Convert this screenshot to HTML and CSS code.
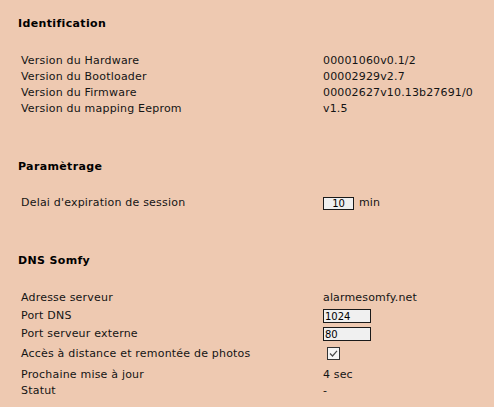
FILE: index.html
```html
<!DOCTYPE html>
<html lang="fr">
<head>
<meta charset="utf-8">
<title>Configuration</title>
<link rel="stylesheet" href="styles.css">
</head>
<body>
<div class="page">
  <section class="sec">
    <h2 class="sec-title">Identification</h2>
    <div class="rows">
      <div class="row"><span class="label">Version du Hardware</span><span class="value">00001060v0.1/2</span></div>
      <div class="row"><span class="label">Version du Bootloader</span><span class="value">00002929v2.7</span></div>
      <div class="row"><span class="label">Version du Firmware</span><span class="value">00002627v10.13b27691/0</span></div>
      <div class="row"><span class="label">Version du mapping Eeprom</span><span class="value">v1.5</span></div>
    </div>
  </section>
  <section class="sec">
    <h2 class="sec-title">Paramètrage</h2>
    <div class="rows rows-tight">
      <div class="row"><span class="label">Delai d'expiration de session</span><span class="value"><input class="field field-short" type="text" value="10"><span class="unit">min</span></span></div>
    </div>
  </section>
  <section class="sec">
    <h2 class="sec-title">DNS Somfy</h2>
    <div class="rows">
      <div class="row row-first"><span class="label">Adresse serveur</span><span class="value">alarmesomfy.net</span></div>
      <div class="row row-input"><span class="label">Port DNS</span><span class="value"><input class="field field-port" type="text" value="1024"></span></div>
      <div class="row row-input"><span class="label">Port serveur externe</span><span class="value"><input class="field field-port" type="text" value="80"></span></div>
      <div class="row row-check"><span class="label">Accès à distance et remontée de photos</span><span class="value"><span class="check"><svg viewBox="0 0 13 13" width="13" height="13"><rect x="0.5" y="0.5" width="12" height="12" fill="#f4f4f4" stroke="#333"/><path d="M3 6.5 L5.5 9 L10 3.8" fill="none" stroke="#4a4a4a" stroke-width="1.2"/></svg></span></span></div>
      <div class="row"><span class="label">Prochaine mise à jour</span><span class="value">4 sec</span></div>
      <div class="row"><span class="label">Statut</span><span class="value">-</span></div>
    </div>
  </section>
</div>
</body>
</html>
```

FILE: styles.css
```css
html, body {
  margin: 0;
  padding: 0;
  background: #eec9b1;
}
body {
  font-family: "DejaVu Sans", Verdana, sans-serif;
  font-size: 11px;
  line-height: 16px;
  color: #141414;
  width: 494px;
  height: 407px;
  overflow: hidden;
}
.page {
  padding: 16px 0 0 18px;
}
.sec + .sec {
  margin-top: 42px;
}
.sec-title {
  margin: 0;
  font-size: 11px;
  font-weight: bold;
  letter-spacing: 0.35px;
  line-height: 16px;
  height: 16px;
  color: #000;
}
.rows {
  margin-top: 21px;
  display: flex;
  flex-direction: column;
}
.rows-tight {
  margin-top: 20px;
}
.row {
  display: flex;
  align-items: center;
  height: 16px;
}
.row-first {
  height: 17px;
  align-items: flex-start;
}
.row-input {
  height: 18px;
}
.row-check {
  height: 24px;
  align-items: flex-start;
  padding-top: 3px;
  box-sizing: border-box;
}
.label {
  width: 302px;
  padding-left: 3px;
  flex: none;
  white-space: nowrap;
  letter-spacing: 0.2px;
}
.value {
  display: flex;
  align-items: center;
  white-space: nowrap;
  letter-spacing: 0.15px;
}
.field {
  box-sizing: border-box;
  height: 14px;
  margin: 0;
  padding: 0 1px;
  border: 1px solid #1a1a1a;
  background: #f0f0f0;
  font-family: "DejaVu Sans", Verdana, sans-serif;
  font-size: 10px;
  line-height: 12px;
  color: #000;
  outline: none;
}
.field-short {
  width: 31px;
  height: 13px;
  text-align: center;
}
.field-port {
  width: 48px;
}
.unit {
  margin-left: 5px;
}
.check {
  display: flex;
  margin-left: 4px;
  margin-top: 1px;
}
```
